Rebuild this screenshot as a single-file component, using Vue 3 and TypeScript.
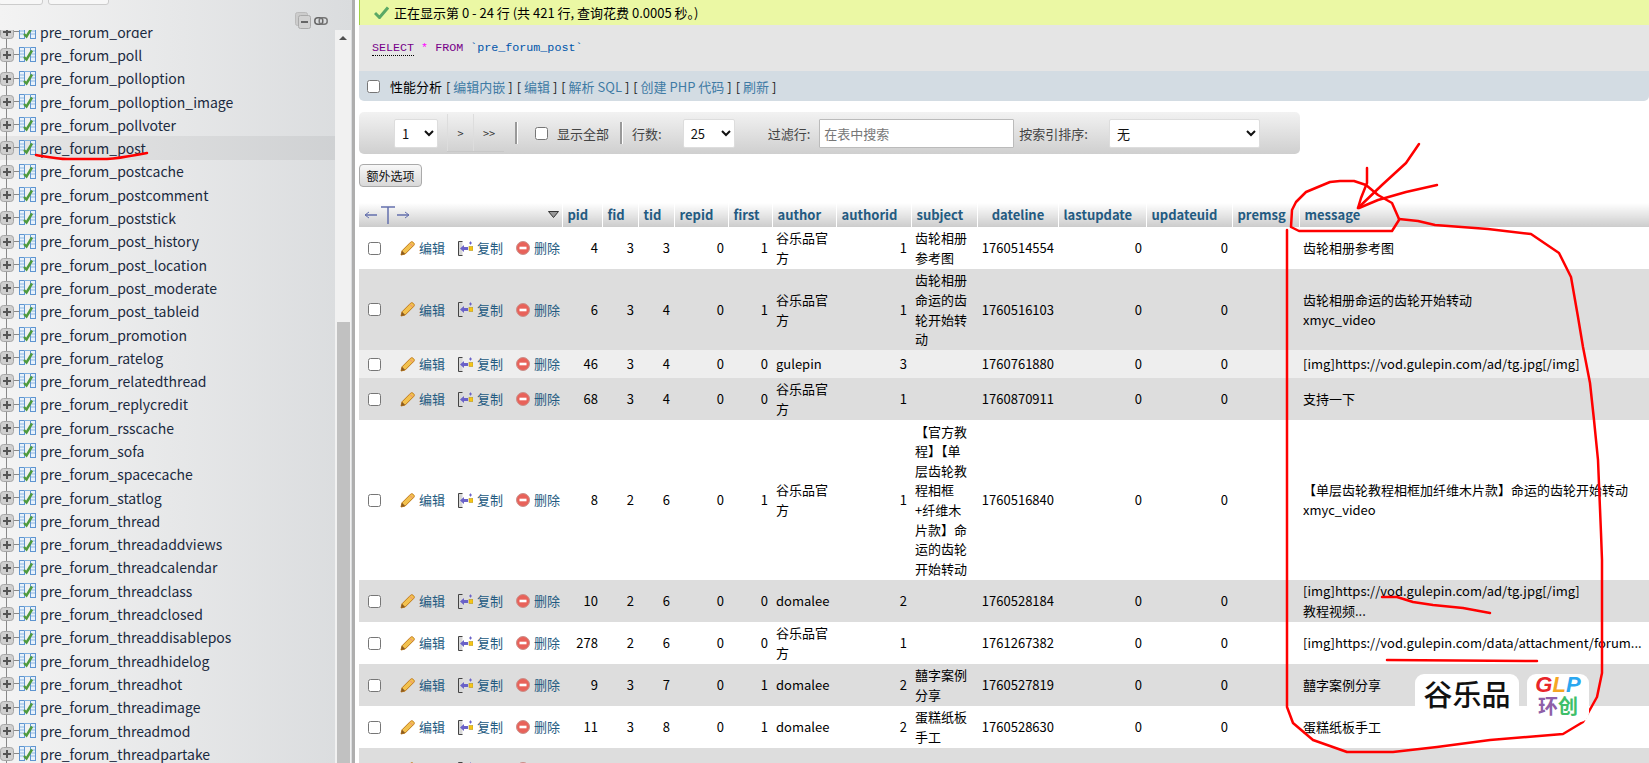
<script setup lang="ts">
const tables: string[] = [
  'order','poll','polloption','polloption_image','pollvoter','post','postcache','postcomment','poststick','post_history',
  'post_location','post_moderate','post_tableid','promotion','ratelog','relatedthread','replycredit','rsscache','sofa',
  'spacecache','statlog','thread','threadaddviews','threadcalendar','threadclass','threadclosed','threaddisablepos',
  'threadhidelog','threadhot','threadimage','threadmod','threadpartake','threadpreview'
].map((t) => 'pre_forum_' + t)

const columns = [
  { name: 'pid', w: 40 }, { name: 'fid', w: 36 }, { name: 'tid', w: 36 }, { name: 'repid', w: 54 }, { name: 'first', w: 44 },
  { name: 'author', w: 64 }, { name: 'authorid', w: 75 }, { name: 'subject', w: 66 }, { name: 'dateline', w: 81 },
  { name: 'lastupdate', w: 88 }, { name: 'updateuid', w: 86 }, { name: 'premsg', w: 67 }, { name: 'message', w: 350 }
]

const GU = '谷乐品官方'
interface Row { h: number; bg: string; n: (number)[]; author: string; aid: number; subject: string; date: number; msg: string }
const rows: Row[] = [
  { h: 42, bg: 'odd', n: [4, 3, 3, 0, 1], author: GU, aid: 1, subject: '齿轮相册参考图', date: 1760514554, msg: '齿轮相册参考图' },
  { h: 81, bg: 'even', n: [6, 3, 4, 0, 1], author: GU, aid: 1, subject: '齿轮相册命运的齿轮开始转动', date: 1760516103, msg: '齿轮相册命运的齿轮开始转动\nxmyc_video' },
  { h: 28, bg: 'hover', n: [46, 3, 4, 0, 0], author: 'gulepin', aid: 3, subject: '', date: 1760761880, msg: '[img]https://vod.gulepin.com/ad/tg.jpg[/img]' },
  { h: 42, bg: 'even', n: [68, 3, 4, 0, 0], author: GU, aid: 1, subject: '', date: 1760870911, msg: '支持一下' },
  { h: 160, bg: 'odd', n: [8, 2, 6, 0, 1], author: GU, aid: 1, subject: '【官方教程】【单层齿轮教程相框+纤维木片款】命运的齿轮开始转动', date: 1760516840, msg: '【单层齿轮教程相框加纤维木片款】命运的齿轮开始转动\nxmyc_video' },
  { h: 42, bg: 'even', n: [10, 2, 6, 0, 0], author: 'domalee', aid: 2, subject: '', date: 1760528184, msg: '[img]https://vod.gulepin.com/ad/tg.jpg[/img]\n教程视频...' },
  { h: 42, bg: 'odd', n: [278, 2, 6, 0, 0], author: GU, aid: 1, subject: '', date: 1761267382, msg: '[img]https://vod.gulepin.com/data/attachment/forum...' },
  { h: 42, bg: 'even', n: [9, 3, 7, 0, 1], author: 'domalee', aid: 2, subject: '囍字案例分享', date: 1760527819, msg: '囍字案例分享' },
  { h: 42, bg: 'odd', n: [11, 3, 8, 0, 1], author: 'domalee', aid: 2, subject: '蛋糕纸板手工', date: 1760528630, msg: '蛋糕纸板手工' },
  { h: 42, bg: 'even', n: [15, 3, 8, 0, 0], author: 'domalee', aid: 2, subject: '', date: 1760527875, msg: '蛋糕做的好大，好漂亮啊' }
]
</script>

<template>
  <div class="page">
    <aside class="nav">
      <div class="nav-top">
        <span class="stub stub-a"></span>
        <span class="stub stub-b"></span>
        <svg class="collapse" width="16" height="17" viewBox="0 0 16 17">
          <rect x="0.5" y="0.5" width="12" height="13" rx="2" fill="#ccc" stroke="#bbb" />
          <rect x="3.5" y="3.5" width="12" height="13" rx="2" fill="#d2d2d2" stroke="#aaa" />
          <rect x="6" y="9" width="7" height="2" fill="#666" />
        </svg>
        <svg class="linkicon" width="14" height="8" viewBox="0 0 14 8">
          <rect x="0.8" y="0.8" width="8" height="6.4" rx="3" fill="none" stroke="#666" stroke-width="1.5" />
          <rect x="5.2" y="0.8" width="8" height="6.4" rx="3" fill="none" stroke="#777" stroke-width="1.5" />
        </svg>
      </div>
      <div class="nav-body">
        <ul class="tree">
          <li v-for="t in tables" :key="t" class="tree-row" :class="{ current: t === 'pre_forum_post' }">
            <svg class="plus" width="14" height="14" viewBox="0 0 14 14">
              <rect x="0.5" y="0.5" width="13" height="13" rx="3" fill="#cfcfcf" stroke="#a5a5a5" />
              <path d="M3 7h8M7 3v8" stroke="#555" stroke-width="2" />
            </svg>
            <svg class="tbl" width="17" height="15" viewBox="0 0 17 15">
              <rect x="0.5" y="0.5" width="5" height="14" fill="#e8f2fb" stroke="#5f95d0" />
              <rect x="11.5" y="0.5" width="5" height="14" fill="#e8f2fb" stroke="#5f95d0" />
              <path d="M1 4h4M1 7h4M1 10h4M12 4h4M12 7h4M12 10h4" stroke="#8fb8e0" />
              <path d="M5 0.5h7" stroke="#7fb0e0" />
              <path d="M5 10l2.5 2.5L13 3.5" fill="none" stroke="#4f9a3c" stroke-width="2.4" />
            </svg>
            <span class="tname">{{ t }}</span>
          </li>
        </ul>
        <div class="scrollbar">
          <span class="arrow-up"></span>
          <span class="thumb"></span>
        </div>
      </div>
    </aside>
    <div class="splitter"></div>

    <main class="main">
      <div class="success">
        <svg width="15" height="13" viewBox="0 0 15 13">
          <path d="M1 7l4.5 4.5L14 1.5" fill="none" stroke="#5aa865" stroke-width="3" />
        </svg>
        <span>正在显示第 0 - 24 行 (共 421 行, 查询花费 0.0005 秒。)</span>
      </div>
      <div class="sql">
        <span class="kw dotted">SELECT</span> <span class="star">*</span> <span class="kw">FROM</span> <span class="ident">`pre_forum_post`</span>
      </div>
      <div class="links">
        <input type="checkbox" class="check" />
        <span class="prof">性能分析</span>
        <span class="brk">[ <a>编辑内嵌</a> ]</span>
        <span class="brk">[ <a>编辑</a> ]</span>
        <span class="brk">[ <a>解析 SQL</a> ]</span>
        <span class="brk">[ <a>创建 PHP 代码</a> ]</span>
        <span class="brk">[ <a>刷新</a> ]</span>
      </div>

      <div class="pager">
        <select class="sel sel-page"><option>1</option></select>
        <div class="pgbtns"><span class="pgbtn">&gt;</span><span class="pgbtn">&gt;&gt;</span></div>
        <span class="sep sep-a"></span>
        <input type="checkbox" class="check showall" />
        <span class="lbl lbl-all">显示全部</span>
        <span class="sep sep-b"></span>
        <span class="lbl lbl-rows">行数:</span>
        <select class="sel sel-rows"><option>25</option></select>
        <span class="lbl lbl-filter">过滤行:</span>
        <input class="search" placeholder="在表中搜索" />
        <span class="lbl lbl-sort">按索引排序:</span>
        <select class="sel sel-sort"><option>无</option></select>
      </div>

      <button class="extra">额外选项</button>

      <table class="data">
        <colgroup>
          <col class="col-act" />
          <col v-for="c in columns" :key="c.name" :style="{ width: c.w + 'px' }" />
        </colgroup>
        <thead>
          <tr>
            <th class="th-act">
              <div class="th-act-in">
                <svg width="47" height="20" viewBox="0 0 47 20">
                  <g fill="none" stroke="#6470ad">
                    <path d="M1 10h12M17 2h14M24 2v17M33 10h12" stroke-width="1.5" />
                    <path d="M5 7l-4 3 4 3M41 7l4 3-4 3" />
                  </g>
                </svg>
                <svg class="sort" width="11" height="7" viewBox="0 0 11 7">
                  <path d="M0.5 0.5h10L5.5 6.5z" fill="#999" stroke="#333" />
                </svg>
              </div>
            </th>
            <th v-for="c in columns" :key="c.name" :class="{ center: c.name === 'dateline' }">{{ c.name }}</th>
          </tr>
        </thead>
        <tbody>
          <tr v-for="r in rows" :key="r.date" :class="r.bg" :style="{ height: r.h + 'px' }">
            <td class="td-act">
              <div class="acts">
                <input type="checkbox" class="check rowcheck" />
                <a class="act act-edit">
                  <svg width="15" height="15" viewBox="0 0 15 15">
                    <path d="M1 14l1-4.2L10.6 1.2c.8-.7 1.6-.7 2.4 0l.8.8c.7.8.7 1.6 0 2.4L5.200 13z" fill="#f2c14e" stroke="#c07a1a" />
                    <path d="M1 14l1-4.200 3.200 3.200z" fill="#8a5a20" />
                    <path d="M10 2.500l2.600 2.600" stroke="#e88" />
                  </svg>
                  编辑
                </a>
                <a class="act act-copy">
                  <svg width="15" height="15" viewBox="0 0 15 15">
                    <path d="M4.500 0.500H0.500V14.500H4.500" fill="#d8d8d8" stroke="#444" />
                    <path d="M2 7.500l4-3.500v2h4v3H6v2z" fill="#6a62c8" />
                    <rect x="11" y="5.500" width="4" height="4" fill="#f5c518" stroke="#a98a10" stroke-width="0.5" />
                    <path d="M12.500 0.500v3M11 2h3" stroke="#6a62c8" />
                  </svg>
                  复制
                </a>
                <a class="act act-del">
                  <svg width="14" height="14" viewBox="0 0 14 14">
                    <circle cx="7" cy="7" r="6.500" fill="#e8625a" stroke="#c9908a" />
                    <rect x="3.500" y="5.700" width="7" height="2.600" fill="#fff" />
                  </svg>
                  删除
                </a>
              </div>
            </td>
            <td v-for="(v, i) in r.n" :key="i" class="num">{{ v }}</td>
            <td>{{ r.author }}</td>
            <td class="num">{{ r.aid }}</td>
            <td>{{ r.subject }}</td>
            <td class="num">{{ r.date }}</td>
            <td class="num">0</td>
            <td class="num">0</td>
            <td></td>
            <td class="msg">{{ r.msg }}</td>
          </tr>
        </tbody>
      </table>
    </main>

    <svg class="ink" width="1649" height="763" viewBox="0 0 1649 763">
      <g fill="none" stroke="#f00" stroke-width="2.500" stroke-linecap="round" stroke-linejoin="round">
        <path d="M36 155C48 157 58 159 67 159L107 159C122 158 135 155 147 153" />
        <path d="M1399 219L1392 203L1378 195L1366 185L1354 181L1340 181L1330 182L1306 192L1296 202L1292 210L1291 227L1299 231L1392 231L1399 220" />
        <path d="M1399 219L1418 221L1435 225L1488 229L1531 234L1559 253L1571 277L1578 317L1583 347L1590 383L1594 420L1598 460L1601 533L1602 560L1602 673L1597 697L1583 722L1563 734L1527 737L1490 740L1437 747L1393 752L1347 752L1313 740L1293 723L1287 707L1287 230" />
        <path d="M1419 144L1406 163L1382 185L1358 208" />
        <path d="M1367 168L1367 183L1361 198L1358 208" />
        <path d="M1437 185L1406 192L1378 200L1359 208" />
        <path d="M1382 597L1397 597L1413 602L1433 605L1463 608L1490 613" />
        <path d="M1387 660L1537 661" />
      </g>
    </svg>

    <div class="mark mark-a">谷乐品</div>
    <div class="mark mark-b">
      <span class="glp"><i class="r">G</i><i class="o">L</i><i class="b">P</i></span>
      <span class="hc"><b class="p">环</b><b class="g">创</b></span>
    </div>
  </div>
</template>

<style>
html, body { margin: 0; overflow: hidden; background: #fff; }
</style>

<style scoped>
.page {
  position: relative;
  display: flex;
  width: 1649px;
  height: 763px;
  overflow: hidden;
  font-family: "Noto Sans CJK SC", "Noto Sans", sans-serif;
  font-size: 13px;
  color: #000;
  background: #fff;
}
.nav {
  width: 352px;
  flex: none;
  display: flex;
  flex-direction: column;
  background: linear-gradient(to right, #f3f3f3, #dadcde);
}
.nav-top {
  height: 30px;
  flex: none;
  position: relative;
  background: linear-gradient(to right, #f3f3f3, #dadcde);
}
.stub { position: absolute; top: -4px; height: 9px; background: #f7f7f7; border: 1px solid #ccc; border-radius: 3px; box-sizing: border-box; }
.stub-a { left: -2px; width: 45px; }
.stub-b { left: 48px; width: 61px; }
.collapse { position: absolute; left: 295px; top: 12px; }
.linkicon { position: absolute; left: 314px; top: 17px; }
.nav-body { flex: 1; display: flex; min-height: 0; }
.tree {
  list-style: none;
  margin: -10px 0 0;
  padding: 0;
  width: 335px;
  flex: none;
  overflow: visible;
  clip-path: inset(10px 0 0 0);
  background-image: linear-gradient(#888, #888);
  background-size: 1px 100%;
  background-position: 6px 0;
  background-repeat: no-repeat;
}
.tree-row {
  height: 23.300px;
  display: flex;
  align-items: center;
  position: relative;
  font-size: 14px;
  line-height: 20px;
  color: #1a2a40;
}
.tree-row.current { background: rgba(0, 0, 0, 0.05); }
.tree-row::before {
  content: "";
  position: absolute;
  left: 13px;
  top: 11px;
  width: 6px;
  height: 1px;
  background: #888;
}
.plus { position: absolute; left: 0; top: 5px; }
.tbl { position: absolute; left: 19px; top: 4px; }
.tname { margin-left: 40px; white-space: nowrap; }
.scrollbar {
  flex: none;
  width: 16px;
  background: #f1f1f1;
  position: relative;
  height: 733px;
}
.arrow-up {
  position: absolute;
  left: 4px;
  top: 6px;
  width: 0;
  height: 0;
  border-left: 4px solid transparent;
  border-right: 4px solid transparent;
  border-bottom: 4px solid #505050;
}
.thumb { position: absolute; left: 2px; right: 1px; top: 292px; bottom: 0; background: #c1c1c1; }
.splitter { width: 3px; flex: none; background: #aeaeae; }
.main { margin-left: 4px; width: 1290px; flex: none; }

.success {
  height: 25px;
  box-sizing: border-box;
  background: #ebf8a4;
  border-left: 1px solid #a2d246;
  display: flex;
  align-items: center;
  gap: 5px;
  padding-left: 14px;
  font-size: 13px;
  white-space: nowrap;
}
.sql {
  height: 46px;
  box-sizing: border-box;
  background: #e5e5e5;
  padding-left: 13px;
  font-family: "Liberation Mono", monospace;
  font-size: 11.700px;
  line-height: 46px;
  white-space: pre;
}
.kw { color: #770088; }
.dotted { border-bottom: 1px dotted #000; }
.star { color: #ff00ff; }
.ident { color: #0055aa; }
.links {
  height: 30px;
  box-sizing: border-box;
  background: #d3dce3;
  border-radius: 0 0 5px 5px;
  display: flex;
  align-items: center;
  padding-left: 8px;
  font-size: 13px;
  white-space: nowrap;
}
.check { width: 13px; height: 13px; margin: 0; flex: none; }
.prof { margin-left: 10px; margin-right: 4px; }
.brk { margin-right: 4px; color: #222; }
.links a { color: #3f7ba5; }

.pager {
  margin-top: 11px;
  width: 941px;
  height: 42px;
  box-sizing: border-box;
  border-radius: 5px;
  background: linear-gradient(#f2f2f2, #cfcfcf);
  display: flex;
  align-items: center;
  font-size: 13px;
  color: #444;
}
.sel {
  height: 29px;
  box-sizing: border-box;
  background: #fff;
  border: 1px solid #ddd;
  border-radius: 2px;
  font-family: inherit;
  font-size: 13px;
  color: #111;
  padding-left: 3px;
}
.sel-page { width: 44px; margin-left: 35px; }
.pgbtns { display: flex; margin-left: 9px; height: 37px; border-bottom: 1px solid #c8c8c8; }
.pgbtn { display: flex; align-items: center; justify-content: center; color: #333; font-size: 11px; border-left: 1px solid #ddd; }
.pgbtn:first-child { width: 25px; }
.pgbtn:last-child { width: 30px; }
.sep { width: 2px; height: 22px; background: #999; border-right: 1px solid #fff; box-sizing: content-box; flex: none; }
.sep-a { margin-left: 11px; }
.showall { margin-left: 17px; }
.lbl { white-space: nowrap; }
.lbl-all { margin-left: 9px; }
.sep-b { margin-left: 11px; }
.lbl-rows { margin-left: 9px; }
.sel-rows { width: 52px; margin-left: 21px; }
.lbl-filter { margin-left: 33px; }
.search {
  margin-left: 9px;
  width: 195px;
  height: 29px;
  box-sizing: border-box;
  border: 1px solid #bbb;
  border-radius: 1px;
  padding: 0 4px;
  font-family: inherit;
  font-size: 13px;
  background: #fff;
}
.search::placeholder { color: #777; }
.lbl-sort { margin-left: 5px; }
.sel-sort { width: 151px; margin-left: 21px; }

.extra {
  display: block;
  margin: 10px 0 16px;
  width: 63px;
  height: 23px;
  padding: 0;
  box-sizing: border-box;
  border: 1px solid #aaa;
  border-radius: 4px;
  background: linear-gradient(#f8f8f8, #d8d8d8);
  font-family: inherit;
  font-size: 12px;
  color: #111;
}

.data { table-layout: fixed; width: 1290px; border-collapse: collapse; border-spacing: 0; }
.col-act { width: 203px; }
.data th {
  height: 24px;
  padding: 0 4px 0 5px;
  background: linear-gradient(#fff, #ccc);
  border-right: 1px solid #fff;
  color: #235a81;
  font-size: 13px;
  font-weight: 700;
  text-align: left;
  white-space: nowrap;
  box-sizing: border-box;
  line-height: 20px;
}
.data th:last-child { border-right: 0; }
.data th.center { text-align: center; }
.th-act { padding: 0 !important; }
.th-act-in { display: flex; align-items: center; padding-left: 5px; }
.sort { margin-left: 137px; margin-top: -2px; }
.data td {
  padding: 1px 4px;
  line-height: 19.600px;
  vertical-align: middle;
  font-size: 13px;
  overflow: hidden;
  word-break: break-all;
}
.data td.num { text-align: right; }
.data td.msg { white-space: pre-line; word-break: normal; overflow: visible; }
.odd td { background: #fff; }
.even td { background: #ddd; }
.hover td { background: #eee; }
.data td.td-act { padding: 0; }
.acts { display: flex; align-items: center; }
.rowcheck { margin-left: 9px; }
.act { display: flex; align-items: center; color: #235a81; white-space: nowrap; }
.act svg { flex: none; }
.act-edit { margin-left: 19px; gap: 4px; }
.act-copy { margin-left: 13px; gap: 4px; }
.act-del { margin-left: 13px; gap: 4px; }

.ink { position: absolute; left: 0; top: 0; pointer-events: none; }
.mark { position: absolute; background: #fff; border-radius: 9px; top: 674px; }
.mark-a {
  left: 1415px;
  width: 104px;
  height: 42px;
  font-size: 29px;
  line-height: 38px;
  padding-top: 0;
  text-align: center;
  color: #111;
  font-family: "Noto Sans CJK SC", sans-serif;
  font-weight: 500;
}
.mark-b {
  left: 1527px;
  width: 62px;
  height: 48px;
  display: flex;
  flex-direction: column;
  align-items: center;
}
.glp { font-size: 22px; line-height: 22px; font-weight: 900; font-family: "Liberation Sans", sans-serif; }
.glp i { font-style: italic; }
.glp .r { color: #e8262a; }
.glp .o { color: #f5a623; }
.glp .b { color: #2ba7f0; }
.hc { font-size: 20px; line-height: 20px; font-family: "Noto Sans CJK SC", sans-serif; }
.hc .p { color: #8e5fa8; }
.hc .g { color: #3fbf6a; }
</style>
